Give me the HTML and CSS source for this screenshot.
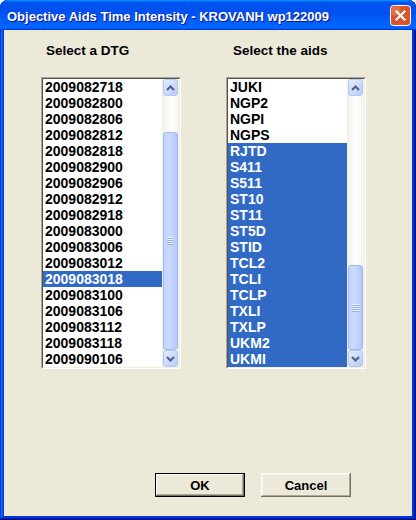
FILE: index.html
```html
<!DOCTYPE html>
<html>
<head>
<meta charset="utf-8">
<link rel="stylesheet" href="styles.css">
</head>
<body>
<div class="window">
  <div class="titlebar">
    <span class="title">Objective Aids Time Intensity - KROVANH wp122009</span>
    <div class="close">
      <svg class="close-icon" width="21" height="21" viewBox="0 0 21 21">
        <rect x="0.5" y="0.5" width="20" height="20" rx="3" ry="3" fill="#d9532b" stroke="#ffffff" stroke-width="1"/>
        <rect x="1.5" y="1.5" width="9" height="9" rx="2" fill="#e9805f" opacity="0.6"/>
        <path d="M6.5 6.5 L14.5 14.5 M14.5 6.5 L6.5 14.5" stroke="#ffffff" stroke-width="2.2" stroke-linecap="square"/>
      </svg>
    </div>
  </div>
  <div class="client">
    <div class="columns">
      <div class="col">
        <div class="heading heading-left">Select a DTG</div>
        <div class="listbox">
          <div class="listbox-inner">
            <ul class="items">
              <li>2009082718</li>
              <li>2009082800</li>
              <li>2009082806</li>
              <li>2009082812</li>
              <li>2009082818</li>
              <li>2009082900</li>
              <li>2009082906</li>
              <li>2009082912</li>
              <li>2009082918</li>
              <li>2009083000</li>
              <li>2009083006</li>
              <li>2009083012</li>
              <li class="sel">2009083018</li>
              <li>2009083100</li>
              <li>2009083106</li>
              <li>2009083112</li>
              <li>2009083118</li>
              <li>2009090106</li>
            </ul>
            <div class="scrollbar">
              <div class="sbtn"><svg width="9" height="6" viewBox="0 0 9 6"><path d="M1 5 L4.5 1.5 L8 5" fill="none" stroke="#4D6185" stroke-width="2"/></svg></div>
              <div class="track">
                <div class="thumb" style="margin-top:36px;height:218px"><span class="grip"></span></div>
              </div>
              <div class="sbtn"><svg width="9" height="6" viewBox="0 0 9 6"><path d="M1 1 L4.5 4.5 L8 1" fill="none" stroke="#4D6185" stroke-width="2"/></svg></div>
            </div>
          </div>
        </div>
      </div>
      <div class="col">
        <div class="heading heading-right">Select the aids</div>
        <div class="listbox">
          <div class="listbox-inner">
            <ul class="items">
              <li>JUKI</li>
              <li>NGP2</li>
              <li>NGPI</li>
              <li>NGPS</li>
              <li class="sel">RJTD</li>
              <li class="sel">S411</li>
              <li class="sel">S511</li>
              <li class="sel">ST10</li>
              <li class="sel">ST11</li>
              <li class="sel">ST5D</li>
              <li class="sel">STID</li>
              <li class="sel">TCL2</li>
              <li class="sel">TCLI</li>
              <li class="sel">TCLP</li>
              <li class="sel">TXLI</li>
              <li class="sel">TXLP</li>
              <li class="sel">UKM2</li>
              <li class="sel">UKMI</li>
            </ul>
            <div class="scrollbar">
              <div class="sbtn"><svg width="9" height="6" viewBox="0 0 9 6"><path d="M1 5 L4.5 1.5 L8 5" fill="none" stroke="#4D6185" stroke-width="2"/></svg></div>
              <div class="track">
                <div class="thumb" style="margin-top:169px;height:85px"><span class="grip"></span></div>
              </div>
              <div class="sbtn"><svg width="9" height="6" viewBox="0 0 9 6"><path d="M1 1 L4.5 4.5 L8 1" fill="none" stroke="#4D6185" stroke-width="2"/></svg></div>
            </div>
          </div>
        </div>
      </div>
    </div>
    <div class="buttons">
      <button class="btn btn-default">OK</button>
      <button class="btn">Cancel</button>
    </div>
  </div>
</div>
</body>
</html>
```
FILE: styles.css
```css
html, body {
  margin: 0;
  padding: 0;
  background: #ffffff;
}
.window {
  width: 416px;
  height: 520px;
  box-sizing: border-box;
  display: flex;
  flex-direction: column;
  background: #0831D9;
  border-radius: 8px 8px 0 0;
  box-shadow: inset -1px -1px #00138c, inset 1px 1px #0831d9, inset -2px -2px #001ea0, inset 2px 2px #166aee, inset -3px -3px #003bda, inset 3px 3px #0855dd;
  overflow: hidden;
}
.titlebar {
  height: 30px;
  flex: none;
  display: flex;
  align-items: center;
  justify-content: space-between;
  padding: 0 5px 0 7px;
  border-radius: 8px 8px 0 0;
  background: linear-gradient(to bottom, #0997ff 0%, #0053ee 8%, #0050ee 40%, #0066ff 88%, #0066ff 93%, #005bff 95%, #003dd7 96%, #003dd7 100%);
}
.title {
  color: #ffffff;
  font-family: "Liberation Sans", Arial, sans-serif;
  font-weight: bold;
  font-size: 13px;
  text-shadow: 1px 1px #0f1089;
  padding-top: 2px;
}
.close {
  width: 21px;
  height: 21px;
  flex: none;
  margin-top: 1px;
}
.close-icon { display: block; }
.client {
  flex: 1;
  margin: 0 4px 4px 4px;
  background: #ECE9D8;
  display: flex;
  flex-direction: column;
}
.columns {
  display: flex;
  gap: 45px;
  padding-left: 37px;
  padding-top: 13px;
}
.col {
  width: 140px;
  display: flex;
  flex-direction: column;
}
.heading {
  font-family: "Liberation Sans", Arial, sans-serif;
  font-weight: bold;
  font-size: 13.5px;
  line-height: 16px;
  color: #000;
}
.heading-left { padding-left: 5px; }
.heading-right { padding-left: 7px; }
.listbox {
  margin-top: 18px;
  border: 1px solid;
  border-color: #ACA899 #ffffff #ffffff #ACA899;
}
.listbox-inner {
  border: 1px solid;
  border-color: #55534c #F1EFE2 #F1EFE2 #55534c;
  height: 288px;
  background: #ffffff;
  display: flex;
}
.items {
  list-style: none;
  margin: 0;
  padding: 0;
  flex: 1;
  font-family: "Liberation Sans", Arial, sans-serif;
  font-weight: bold;
  font-size: 14px;
  color: #000;
}
.items li {
  height: 16px;
  line-height: 16px;
  padding-left: 2px;
  white-space: nowrap;
}
.items li.sel {
  background: #316AC5;
  color: #ffffff;
}
.scrollbar {
  width: 17px;
  flex: none;
  display: flex;
  flex-direction: column;
  background: linear-gradient(to right, #eeede5 0%, #f7f6f1 20%, #fdfdfa 60%, #f3f1ec 100%);
}
.sbtn {
  height: 17px;
  box-sizing: border-box;
  margin: 0 1px 0 1px;
  flex: none;
  border: 1px solid #b3c7f3;
  border-radius: 3px;
  background: linear-gradient(135deg, #e6eefe 0%, #cddbfc 50%, #b8ccf9 100%);
  display: flex;
  align-items: center;
  justify-content: center;
}
.sbtn svg { display: block; }
.track {
  flex: 1;
  display: flex;
  flex-direction: column;
}
.thumb {
  box-sizing: border-box;
  margin-left: 1px;
  margin-right: 1px;
  border: 1px solid #a3b9ef;
  border-radius: 3px;
  background: linear-gradient(to right, #c4d4fc 0%, #cad9fd 40%, #bccffb 80%, #b3c8f8 100%);
  display: flex;
  align-items: center;
  justify-content: center;
}
.grip {
  width: 7px;
  height: 8px;
  background: repeating-linear-gradient(to bottom, #eef4ff 0px, #eef4ff 1px, #8fb0f4 1px, #8fb0f4 2px);
}
.buttons {
  display: flex;
  gap: 16px;
  padding-left: 151px;
  margin-top: 104px;
}
.btn {
  width: 90px;
  height: 24px;
  box-sizing: border-box;
  margin: 0;
  padding: 0;
  font-family: "Liberation Sans", Arial, sans-serif;
  font-weight: bold;
  font-size: 13px;
  color: #000;
  background: #ECE9D8;
  border: none;
  box-shadow: inset -1px -1px #716F64, inset 1px 1px #ffffff, inset -2px -2px #ACA899, inset 2px 2px #F6F5EE;
}
.btn-default {
  border: 1px solid #000;
  box-shadow: inset -1px -1px #716F64, inset 1px 1px #ffffff, inset -2px -2px #ACA899;
}
```
